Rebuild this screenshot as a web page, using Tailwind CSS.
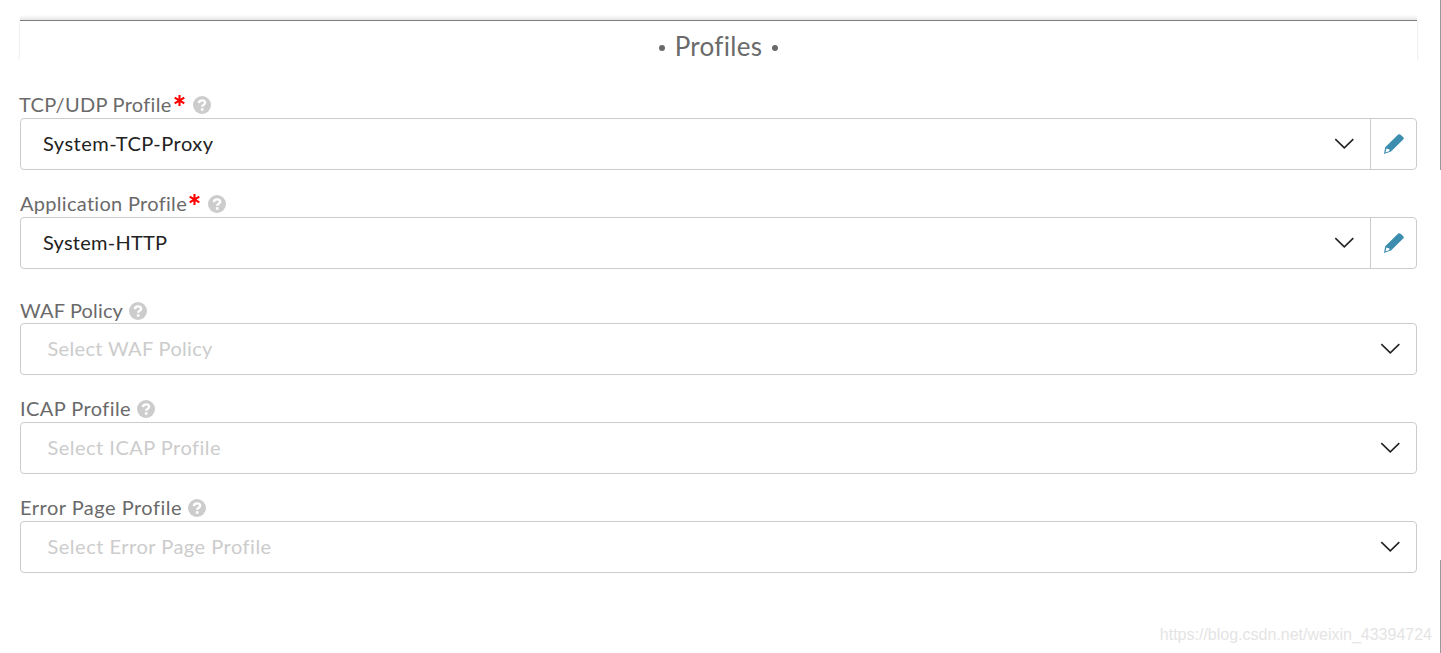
<!DOCTYPE html>
<html lang="en">
<head>
    <meta charset="UTF-8">
    <meta name="viewport" content="width=device-width, initial-scale=1.0">
    <title>Profiles</title>
    <script src="https://cdn.jsdelivr.net/npm/@tailwindcss/browser@4"></script>
</head>
<body class="relative h-screen overflow-hidden bg-white font-['Lato',sans-serif] text-xl text-[#6a6a6a]">
    <!-- Shared icons -->
    <svg class="hidden">
        <symbol id="help" viewBox="0 0 18 18">
            <circle cx="9" cy="9" r="9" fill="#ccc"/>
            <path d="M5.9 7.1C6 5.2 7.3 4.4 9.1 4.4C10.9 4.4 12.1 5.3 12.1 6.8C12.1 8.8 9.2 8.6 9.2 10.8" fill="none" stroke="#fff" stroke-width="2.4"/>
            <rect x="7.9" y="12.2" width="2.6" height="2.6" fill="#fff"/>
        </symbol>
        <symbol id="chevron" viewBox="0 0 20 12">
            <path d="M1.3 1.2L10.3 9.8L19.3 1.2" fill="none" stroke="#222" stroke-width="1.6"/>
        </symbol>
        <symbol id="pencil" viewBox="0 0 20 20">
            <path fill="#3d8eae" fill-rule="evenodd" d="M14.2 .6Q15.4 -.3 16.6 .7L19.3 3.3Q20.3 4.4 19.2 5.5L7 17.4L0 20L1.2 13.2ZM2.4 14.4L1.5 18.4L5.6 16.9L5.2 15.3L3.8 14.9Z"/>
        </symbol>
        <symbol id="required" viewBox="0 0 11 11">
            <path d="M5.5 0V11M.7 2.6L10.3 8.4M10.3 2.6L.7 8.4" stroke="#f00" stroke-width="2.1"/>
        </symbol>
    </svg>

    <main class="flex flex-col pl-5 pr-6 pt-5">
        <header class="relative flex h-10 items-center justify-center gap-2.5 border-t border-[#7c7c7c] pt-3 text-[26px]">
            <div class="absolute -top-[6px] left-0 h-[5px] w-full bg-linear-to-t from-black/10 to-transparent"></div>
            <div class="absolute top-0 -left-0.5 h-full w-0.5 bg-linear-to-l from-black/7 to-transparent"></div>
            <div class="absolute top-0 -right-0.5 h-full w-0.5 bg-linear-to-r from-black/7 to-transparent"></div>
            <span class="mt-0.5 size-1.5 rounded-full bg-[#6a6a6a]"></span>
            <h1 class="tracking-[0.3px]">Profiles</h1>
            <span class="mt-0.5 size-1.5 rounded-full bg-[#6a6a6a]"></span>
        </header>

        <div class="mt-8">
            <div class="flex h-[26px] items-center">
                <label class="-ml-px pb-0.5 tracking-[0.3px]">TCP/UDP Profile</label>
                <svg class="mb-2.5 ml-0.5 size-[11px]"><use href="#required"/></svg>
                <svg class="ml-2 size-[18px]"><use href="#help"/></svg>
            </div>
            <div class="flex h-[52px] items-center rounded border border-[#ccc]">
                <span class="flex-1 pb-0.5 pl-[22px] tracking-[0.48px] text-[#222]">System-TCP-Proxy</span>
                <svg class="mr-4 h-3 w-5"><use href="#chevron"/></svg>
                <button class="flex h-full w-[46px] items-center justify-center border-l border-[#ccc]"><svg class="size-5"><use href="#pencil"/></svg></button>
            </div>
        </div>

        <div class="mt-[21px]">
            <div class="flex h-[26px] items-center">
                <label class="pb-0.5 tracking-[0.3px]">Application Profile</label>
                <svg class="mb-2.5 ml-0.5 size-[11px]"><use href="#required"/></svg>
                <svg class="ml-2 size-[18px]"><use href="#help"/></svg>
            </div>
            <div class="flex h-[52px] items-center rounded border border-[#ccc]">
                <span class="flex-1 pb-0.5 pl-[22px] tracking-[0.25px] text-[#222]">System-HTTP</span>
                <svg class="mr-4 h-3 w-5"><use href="#chevron"/></svg>
                <button class="flex h-full w-[46px] items-center justify-center border-l border-[#ccc]"><svg class="size-5"><use href="#pencil"/></svg></button>
            </div>
        </div>

        <div class="mt-7">
            <div class="flex h-[26px] items-center">
                <label class="tracking-[0.15px]">WAF Policy</label>
                <svg class="mt-0.5 ml-1.5 size-[18px]"><use href="#help"/></svg>
            </div>
            <div class="flex h-[52px] items-center rounded border border-[#ccc]">
                <span class="flex-1 pb-0.5 pl-[26.5px] tracking-[0.32px] text-[#ccc]">Select WAF Policy</span>
                <svg class="mr-4 h-3 w-5"><use href="#chevron"/></svg>
            </div>
        </div>

        <div class="mt-[21px]">
            <div class="flex h-[26px] items-center">
                <label class="pb-0.5 tracking-[0.42px]">ICAP Profile</label>
                <svg class="ml-1.5 size-[18px]"><use href="#help"/></svg>
            </div>
            <div class="flex h-[52px] items-center rounded border border-[#ccc]">
                <span class="flex-1 pb-0.5 pl-[26.5px] tracking-[0.48px] text-[#ccc]">Select ICAP Profile</span>
                <svg class="mr-4 h-3 w-5"><use href="#chevron"/></svg>
            </div>
        </div>

        <div class="mt-[21px]">
            <div class="flex h-[26px] items-center">
                <label class="pb-0.5 tracking-[0.49px]">Error Page Profile</label>
                <svg class="ml-1.5 size-[18px]"><use href="#help"/></svg>
            </div>
            <div class="flex h-[52px] items-center rounded border border-[#ccc]">
                <span class="flex-1 pb-0.5 pl-[26.5px] tracking-[0.5px] text-[#ccc]">Select Error Page Profile</span>
                <svg class="mr-4 h-3 w-5"><use href="#chevron"/></svg>
            </div>
        </div>
    </main>

    <!-- Scrollbar edge -->
    <div class="absolute top-0 right-0 h-[170px] w-px bg-[#999]"></div>
    <div class="absolute top-[560px] right-0 bottom-0 w-px bg-[#999]"></div>

    <p class="absolute right-[9px] bottom-1.5 font-['Liberation_Sans',sans-serif] text-base text-[#e4e4e4]">https://blog.csdn.net/weixin_43394724</p>
</body>
</html>
